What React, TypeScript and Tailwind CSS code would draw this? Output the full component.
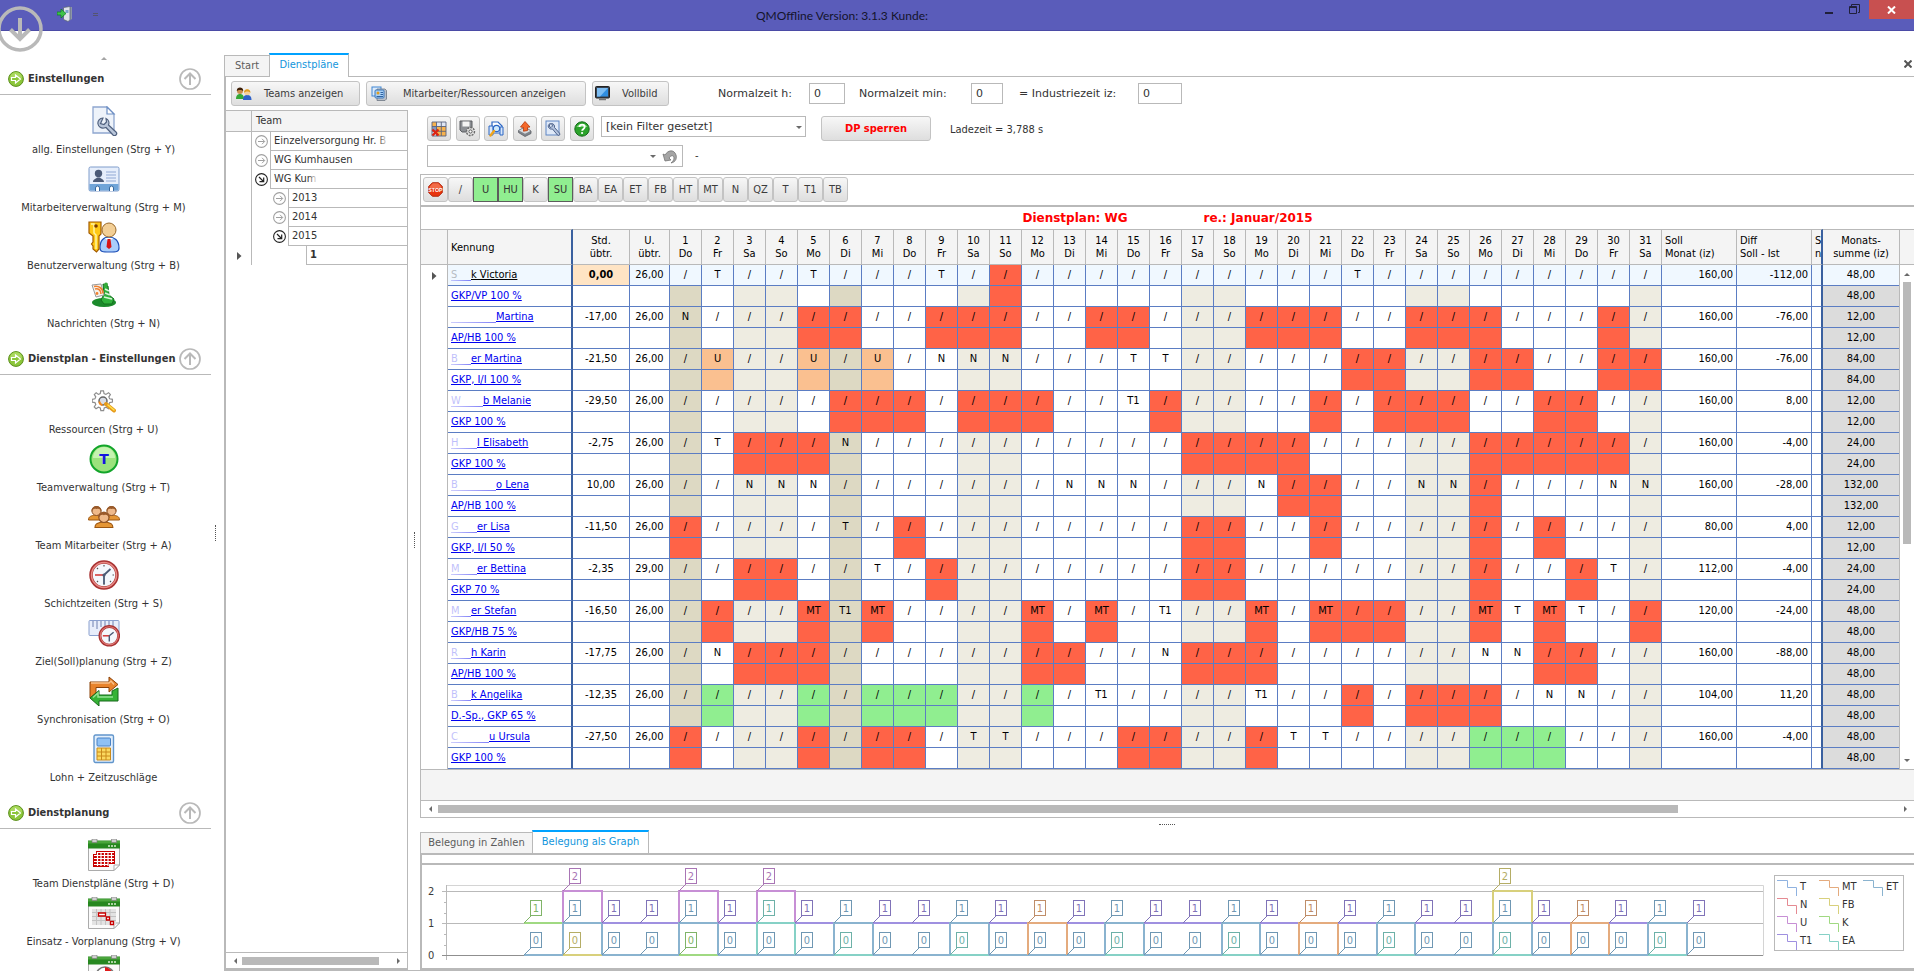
import { useState } from "react";
import type { ReactNode } from "react";

interface NavItem {
  label: string;
  icon: ReactNode;
}

interface NavSection {
  title: string;
  items: NavItem[];
}

interface Employee {
  head: string;
  tail: string;
  fade: string;
  role: string;
  hours: string;
  vacation: string;
  marks: Record<number, string>;
  red?: number[];
  green?: number[];
  orange?: number[];
  target: string;
  diff: string;
  total: string;
}

const WEEKDAYS = ["Do", "Fr", "Sa", "So", "Mo", "Di", "Mi"];
const DAYS = Array.from({ length: 31 }, (_, i) => i + 1);
const WEEKEND = [3, 4, 10, 11, 17, 18, 24, 25, 31];
const HOLIDAYS = [1, 6];

const EMPLOYEES: Employee[] = [
  { head: "S", tail: "k Victoria", fade: "w-[20px]", role: "GKP/VP 100 %", hours: "0,00", vacation: "26,00", marks: { 2: "T", 5: "T", 9: "T", 22: "T" }, red: [11], target: "160,00", diff: "-112,00", total: "48,00" },
  { head: "", tail: "Martina", fade: "w-[45px]", role: "AP/HB 100 %", hours: "-17,00", vacation: "26,00", marks: { 1: "N" }, red: [5, 6, 9, 10, 11, 14, 15, 19, 20, 21, 24, 25, 26, 30], target: "160,00", diff: "-76,00", total: "12,00" },
  { head: "B", tail: "er Martina", fade: "w-[20px]", role: "GKP, I/I 100 %", hours: "-21,50", vacation: "26,00", marks: { 2: "U", 5: "U", 7: "U", 9: "N", 10: "N", 11: "N", 15: "T", 16: "T" }, red: [22, 23, 26, 27, 30, 31], orange: [2, 5, 7], target: "160,00", diff: "-76,00", total: "84,00" },
  { head: "W", tail: "b Melanie", fade: "w-[32px]", role: "GKP 100 %", hours: "-29,50", vacation: "26,00", marks: { 15: "T1" }, red: [6, 7, 8, 10, 11, 12, 16, 21, 23, 24, 25, 28, 29], target: "160,00", diff: "8,00", total: "12,00" },
  { head: "H", tail: "l Elisabeth", fade: "w-[26px]", role: "GKP 100 %", hours: "-2,75", vacation: "26,00", marks: { 2: "T", 6: "N" }, red: [3, 4, 5, 17, 18, 19, 20, 26, 27, 28, 29, 30], target: "160,00", diff: "-4,00", total: "24,00" },
  { head: "B", tail: "o Lena", fade: "w-[45px]", role: "AP/HB 100 %", hours: "10,00", vacation: "26,00", marks: { 3: "N", 4: "N", 5: "N", 13: "N", 14: "N", 15: "N", 19: "N", 24: "N", 25: "N", 30: "N", 31: "N" }, red: [20, 21, 26], target: "160,00", diff: "-28,00", total: "132,00" },
  { head: "G", tail: "er Lisa", fade: "w-[26px]", role: "GKP, I/I 50 %", hours: "-11,50", vacation: "26,00", marks: { 6: "T" }, red: [1, 8, 17, 18, 21, 26, 28], target: "80,00", diff: "4,00", total: "12,00" },
  { head: "M", tail: "er Bettina", fade: "w-[26px]", role: "GKP 70 %", hours: "-2,35", vacation: "29,00", marks: { 7: "T", 30: "T" }, red: [3, 4, 9, 17, 18, 26, 29], target: "112,00", diff: "-4,00", total: "24,00" },
  { head: "M", tail: "er Stefan", fade: "w-[20px]", role: "GKP/HB 75 %", hours: "-16,50", vacation: "26,00", marks: { 5: "MT", 6: "T1", 7: "MT", 12: "MT", 14: "MT", 16: "T1", 19: "MT", 21: "MT", 26: "MT", 27: "T", 28: "MT", 29: "T" }, red: [2, 5, 7, 12, 14, 19, 21, 22, 23, 26, 28, 31], target: "120,00", diff: "-24,00", total: "48,00" },
  { head: "R", tail: "h Karin", fade: "w-[20px]", role: "AP/HB 100 %", hours: "-17,75", vacation: "26,00", marks: { 2: "N", 16: "N", 26: "N", 27: "N" }, red: [3, 4, 5, 12, 13, 17, 18, 19, 28, 29], target: "160,00", diff: "-88,00", total: "48,00" },
  { head: "B", tail: "k Angelika", fade: "w-[20px]", role: "D.-Sp., GKP 65 %", hours: "-12,35", vacation: "26,00", marks: { 14: "T1", 19: "T1", 28: "N", 29: "N" }, red: [22, 24, 25, 26], green: [2, 5, 7, 8, 9, 12], target: "104,00", diff: "11,20", total: "48,00" },
  { head: "C", tail: "u Ursula", fade: "w-[38px]", role: "GKP 100 %", hours: "-27,50", vacation: "26,00", marks: { 10: "T", 11: "T", 20: "T", 21: "T" }, red: [1, 5, 7, 8, 15, 16, 19], green: [26, 27, 28], target: "160,00", diff: "-4,00", total: "48,00" },
];

const SHIFT_KEYS = ["/", "U", "HU", "K", "SU", "BA", "EA", "ET", "FB", "HT", "MT", "N", "QZ", "T", "T1", "TB"];
const ACTIVE_KEYS = ["U", "HU", "SU"];

const BUTTON =
  "flex items-center rounded-[3px] border border-[#c3c3c3] bg-linear-to-b from-[#f7f7f7] to-[#dedede] text-[#3b3b3b]";

/* ---------- icons ---------- */

function PageWrenchIcon() {
  return (
    <svg width="30" height="30" viewBox="0 0 30 30">
      <path d="M4 1h14l7 7v19H4z" fill="#eef3fa" stroke="#8ea6cf" strokeWidth="1.3" />
      <path d="M18 1v7h7z" fill="#fff" stroke="#6d8fc4" strokeWidth="1.2" />
      <path d="M13 11a5 5 0 0 0-5 6 5 5 0 0 0 6 4l2-.5 7 7.500c2 2 5-1 3-3l-7.500-7a5 5 0 0 0-2.500-6.500l.5 3.500-2.500 2.500-3.500-1z" transform="translate(1 1)" fill="#b9c6da" stroke="#50617f" strokeWidth="1.2" />
    </svg>
  );
}

function ContactCardIcon() {
  return (
    <svg width="32" height="26" viewBox="0 0 32 26">
      <rect x="1" y="1" width="30" height="24" rx="1.500" fill="#e6eefb" stroke="#7e9ccb" />
      <rect x="1.500" y="18" width="29" height="6.500" fill="#6fa4d8" />
      <circle cx="10.500" cy="7.500" r="3.700" fill="#4c5b78" />
      <path d="M5 16c0-3 3-3 4-4.500h3c1 1.500 4 1.500 4 4.500z" fill="#4c5b78" />
      <path d="M18 6h10M18 9h10M18 12h10M18 15h10" stroke="#90a8d4" />
      <path d="M7.500 25v-3a2 2 0 0 1 4 0v3M21.500 25v-3a2 2 0 0 1 4 0v3" fill="#fff" stroke="#35679d" />
    </svg>
  );
}

function KeyUserIcon() {
  return (
    <svg width="32" height="32" viewBox="0 0 32 32">
      <path d="M12 27c0-8 4-11 9-11s10 3 10 11c0 4-3 4-9.500 4S12 31 12 27z" fill="#a9cdfa" stroke="#1e50b8" strokeWidth="1.200" />
      <path d="M17 17l4 4 4-4z" fill="#fff" />
      <path d="M19.500 18h3l1 8-2.500 2-2.500-2z" fill="#d81414" />
      <circle cx="21" cy="9" r="7" fill="#f3cf96" stroke="#9b6a2b" />
      <path d="M1 1h12v12l-2 2v13l-2.500 3L5 28v-3l-1.500-2L5 21v-6l-4-3z" fill="#ffc814" stroke="#a35a00" strokeWidth="1.200" />
      <path d="M3 3h3v9l2 2v14" fill="none" stroke="#fff3a0" strokeWidth="1.500" />
      <circle cx="8" cy="5" r="1.800" fill="#7b3b00" />
    </svg>
  );
}

function NewsIcon() {
  return (
    <svg width="26" height="26" viewBox="0 0 26 26">
      <ellipse cx="13" cy="20.500" rx="12" ry="4.500" fill="#1b8a2b" />
      <path d="M12 2l5 2 1 9 5 4-2 5h-8l-3-4 3-6z" fill="#2fb23b" stroke="#14701f" />
      <path d="M14 7l4 2M14 11l5 2M13 15l8 2" stroke="#d9f5d8" strokeWidth="1.500" />
      <path d="M1 3l9-1 3 11-8 2z" fill="#f5f1ea" stroke="#9a9a9a" />
      <path d="M4 7c3-1 6 1 6 5M3 4.500c5-1 9 2 9 7" fill="none" stroke="#f08030" strokeWidth="1.600" />
      <circle cx="6" cy="11.500" r="1.400" fill="#f08030" />
      <circle cx="15" cy="2.500" r="2" fill="#36a93b" />
    </svg>
  );
}

function GearLensIcon() {
  return (
    <svg width="24" height="24" viewBox="0 0 24 24">
      <path d="M9.500 2h3l.6 3 2 .9L18 4l2 2-1.700 2.600.9 2 3 .6v3l-3 .6-.9 2L20 19.500l-2 2-2.700-1.700-2 .8-.7 3h-3l-.6-3-2-.8-2.600 1.700-2-2 1.700-2.700-.9-2-3-.6v-3l3-.6.9-2L2.500 6l2-2L7 5.900 9 5z" transform="scale(.92)" fill="#fff" stroke="#8d8d8d" strokeWidth="1.300" />
      <circle cx="11" cy="12" r="4" fill="#d8dde6" stroke="#666" strokeWidth="1.500" />
      <path d="M7.500 12.500a3.500 3.500 0 0 0 3 3.500" stroke="#f48a1c" strokeWidth="2" fill="none" />
      <path d="M14 15l8 6.500" stroke="#e79b1b" strokeWidth="4" strokeLinecap="round" />
      <path d="M16 16l6 5" stroke="#ffe14d" strokeWidth="1.500" strokeLinecap="round" />
    </svg>
  );
}

function TeamBadgeIcon() {
  return (
    <svg width="30" height="30" viewBox="0 0 30 30">
      <circle cx="15" cy="15" r="13.500" fill="#9be27c" stroke="#12a52a" strokeWidth="2" />
      <path d="M4 14a11 11 0 0 1 22 0z" fill="#c5f3b0" />
      <text x="15" y="20" textAnchor="middle" fontSize="14" fontWeight="bold" fill="#1414e0" fontFamily="DejaVu Sans, sans-serif">
        T
      </text>
    </svg>
  );
}

function Person({ x, y }: { x: number; y: number }) {
  return (
    <g transform={`translate(${x} ${y})`}>
      <path d="M0 15c0-4 3-4 6-5h4c3 1 6 1 6 5z" fill="#e59635" stroke="#9c5610" />
      <circle cx="8" cy="6" r="4.500" fill="#efb98a" stroke="#8d5226" />
      <path d="M3 7c-1-8 11-8 10 0-1-3-3-4-5-3-2-1-4 0-5 3z" fill="#9a5a2a" />
    </g>
  );
}

function TeamIcon() {
  return (
    <svg width="32" height="27" viewBox="0 0 32 27">
      <Person x={0.5} y={1} />
      <Person x={15.5} y={1} />
      <g transform="translate(-2 0) scale(1.120)">
        <Person x={8} y={6} />
      </g>
    </svg>
  );
}

function ClockIcon() {
  return (
    <svg width="30" height="30" viewBox="0 0 30 30">
      <circle cx="15" cy="15" r="13" fill="#f4f7fc" stroke="#a83232" strokeWidth="3.500" />
      <circle cx="15" cy="15" r="12.500" fill="none" stroke="#e88a85" strokeWidth="1.500" />
      <path d="M15 5v1.500M15 23.500V25M8 8l1 1M22 22l-1-1M8 22l1-1M25 15h-1.500" stroke="#555" strokeWidth="1.200" />
      <path d="M6 15h9" stroke="#d03030" strokeWidth="1.500" />
      <path d="M15 15l6.500-6M15 15v9" stroke="#4b5a75" strokeWidth="1.800" />
      <circle cx="15" cy="15" r="1.600" fill="#4b5a75" />
    </svg>
  );
}

function RulerClockIcon() {
  return (
    <svg width="32" height="28" viewBox="0 0 32 28">
      <rect x="1" y="1.500" width="30" height="15" rx="1" fill="#e8eefb" stroke="#8aa0cf" />
      <path d="M5 2v6M9 2v8M13 2v6M17 2v6M21 2v6M25 2v6" stroke="#6e80b0" />
      <g transform="translate(10.500 6) scale(.72)">
        <circle cx="15" cy="15" r="13" fill="#f4f7fc" stroke="#a83232" strokeWidth="4" />
        <circle cx="15" cy="15" r="12.500" fill="none" stroke="#e07a76" strokeWidth="1.500" />
        <path d="M6 15h9" stroke="#d03030" strokeWidth="2" />
        <path d="M15 15l6-5M15 15v8" stroke="#4b5a75" strokeWidth="2" />
      </g>
    </svg>
  );
}

function SyncIcon() {
  return (
    <svg width="30" height="30" viewBox="0 0 30 30">
      <path d="M1 6h19V1l9 7.500-9 7.500v-4.500H7V17l-6 5z" fill="#e8832b" stroke="#8a4209" />
      <path d="M2 7h18l2-2 3 3.500" fill="none" stroke="#f7c18a" strokeWidth="1.500" />
      <path d="M29 12v13H10v5l-9-8 9-7.500V19h13v-4z" fill="#36b336" stroke="#16691a" />
      <path d="M4 21.500L9 17v4h15" fill="none" stroke="#94e394" strokeWidth="1.500" />
    </svg>
  );
}

function CalculatorIcon() {
  return (
    <svg width="22" height="30" viewBox="0 0 22 30">
      <rect x="1" y="1" width="19.500" height="27.500" rx="1.500" fill="#e2effc" stroke="#6195cb" strokeWidth="1.400" />
      <rect x="4" y="4" width="13.500" height="8" rx="1" fill="#8fc1f5" stroke="#4a82c5" />
      <path d="M4 14h13.500v12H4z" fill="#fbd95f" stroke="#c98a1b" />
      <path d="M8.500 14v12M13 14v12M4 18h13.500M4 22h13.500" stroke="#c98a1b" />
    </svg>
  );
}

function CalendarIcon({ variant }: { variant: "grid" | "plan" | "pie" }) {
  return (
    <svg width="32" height="32" viewBox="0 0 32 32">
      <path d="M.5 2.500h31V26L26 31.500H.5z" fill="#fafafa" stroke="#ababab" />
      <path d="M0 1.500h32v8H0z" fill="#26871f" />
      <path d="M0 2h32v2.500H0z" fill="#4aa53c" />
      <path d="M20 7h8" stroke="#d7edcf" strokeWidth="1.500" strokeDasharray="2 1" />
      <path d="M4 0h5v3.500H4zM23.500 0h5v3.500h-5z" fill="#cfcfcf" stroke="#777" strokeWidth=".6" />
      <path d="M31.500 26H26v5.500z" fill="#fff" stroke="#ababab" />
      {variant === "grid" && (
        <g>
          <path d="M8 12h19v13h-6v3H5V15h3z" fill="#c80000" />
          <path d="M6 16.500h20M6 19.500h20M6 22.500h20M6 25.500h14M9.500 13v14M13 13v14M16.500 13v14M20 13v14M23.500 13v11M9 13.500h17" stroke="#fff" strokeWidth="1.200" />
        </g>
      )}
      {variant === "plan" && (
        <g>
          <path d="M4 12h24v16H4z" fill="#e3e3e3" />
          <path d="M4 15.500h24M4 19.500h24M4 23.500h24M8.500 12v16M13 12v16M17.500 12v16M22 12v16" stroke="#c2c2c2" />
          <path d="M10.500 16h7v3h-7zM18.500 20h3v3h-3zM22.500 24.500h3v3h-3z" fill="#fff" stroke="#c80000" strokeWidth="1.300" />
        </g>
      )}
      {variant === "pie" && (
        <g>
          <circle cx="17" cy="21" r="9" fill="#fff" stroke="#777" strokeWidth="1.500" />
          <path d="M17 21v-9a9 9 0 0 1 8 9z" fill="#e01b1b" />
        </g>
      )}
    </svg>
  );
}

function GreenArrowIcon() {
  return (
    <svg width="16" height="16" viewBox="0 0 16 16">
      <circle cx="8" cy="8" r="7.400" fill="#8cc63a" stroke="#5b8f1c" />
      <path d="M2 7a6 6 0 0 1 12 0z" fill="#b4e06a" opacity=".7" />
      <path d="M3.500 6.500h4v-2.500l5 4-5 4V9.500h-4z" fill="#8cc63a" stroke="#fff" strokeWidth="1.200" />
    </svg>
  );
}

function CircleArrowUpIcon() {
  return (
    <svg width="22" height="22" viewBox="0 0 22 22" fill="none" stroke="#b9b9b9">
      <circle cx="11" cy="11" r="10" strokeWidth="1.700" />
      <path d="M11 17V6M5.500 11L11 5.500l5.500 5.500" strokeWidth="2" />
    </svg>
  );
}

function ExpanderIcon({ open }: { open: boolean }) {
  return (
    <svg width="13" height="13" viewBox="0 0 13 13" fill="none" stroke={open ? "#222" : "#a0a0a0"}>
      <circle cx="6.500" cy="6.500" r="5.900" strokeWidth="1.100" />
      {open ? <path d="M4 4l4.500 4.500M8.700 4.500v4.200H4.500" strokeWidth="1.200" /> : <path d="M3 6.500h6.500M7 3.800l2.700 2.700L7 9.200" />}
    </svg>
  );
}

function Arrow({ dir }: { dir: "left" | "right" | "up" | "down" }) {
  const paths = {
    left: "M7 2v6L4 5z",
    right: "M4 2v6l3-3z",
    up: "M2 7h6L5 4z",
    down: "M2 4h6L5 7z",
  };
  return (
    <svg width="10" height="10" viewBox="0 0 10 10" className="shrink-0">
      <path d={paths[dir]} fill="#6a6a6a" />
    </svg>
  );
}

function DoorIcon() {
  return (
    <svg width="16" height="16" viewBox="0 0 16 16">
      <path d="M7 1h8v12l-3 2V3z" fill="#8d96a8" />
      <path d="M6.500 1.500L13 .5V14l-2 1.500-4.500-2z" fill="#dfe3ea" stroke="#5b6478" strokeWidth=".8" />
      <path d="M8.500 4h3v3h-3z" fill="#7da3cf" />
      <path d="M0 6h4V3l5 4.500L4 12V9H0z" fill="#3ec24a" stroke="#0c7a20" strokeWidth=".7" />
    </svg>
  );
}

function PeopleSmallIcon() {
  return (
    <svg width="16" height="14" viewBox="0 0 16 14">
      <path d="M0 12c0-4 2-5 4-5s4 1 4 5z" fill="#36a836" />
      <circle cx="4" cy="4" r="3" fill="#c98e4d" />
      <path d="M.8 4C.5-.8 7.500-.8 7.200 4 6 2.500 2 2.500.8 4z" fill="#3d1f08" />
      <path d="M7 13c0-4 2-5 4.200-5s4.300 1 4.300 5z" fill="#2f62c9" />
      <circle cx="11.200" cy="5.300" r="3" fill="#f4cf9a" />
      <path d="M8 6c-.5-5 6.800-5 6.400 0-1-2-5-2-6.400 0z" fill="#e09c1f" />
    </svg>
  );
}

function CardsSmallIcon() {
  return (
    <svg width="16" height="15" viewBox="0 0 16 15">
      <rect x="1" y="1" width="9" height="9" fill="#dcebfb" stroke="#3f86d4" />
      <path d="M6 3h8l1.500 1.500V13L14 14.500H6z" fill="#b9bfc8" stroke="#6d7683" strokeWidth=".8" />
      <rect x="4" y="4" width="9" height="8" rx="1" fill="#a9d0f5" stroke="#3f78ba" />
      <circle cx="7" cy="7" r="1.500" fill="#e09c1f" />
      <path d="M9.500 6.500h2.500M9.500 8.500h2.500M5.500 10.500H12" stroke="#2f62a0" />
    </svg>
  );
}

function MonitorIcon() {
  return (
    <svg width="15" height="15" viewBox="0 0 15 15">
      <rect x=".5" y=".5" width="14" height="11.500" rx="1" fill="#39424f" stroke="#222" />
      <rect x="2" y="2" width="11" height="8.500" fill="#2f8ee0" />
      <path d="M2 2h11L5 10.500H2z" fill="#7dbdf2" />
      <path d="M4 13.500h7" stroke="#777" strokeWidth="1.500" />
    </svg>
  );
}

function GridDeleteIcon() {
  return (
    <svg width="16" height="16" viewBox="0 0 16 16">
      <path d="M1 1h14v14H1z" fill="#dfe6f4" />
      <path d="M1 1h4.500v4.500H1zM5.500 5.500h9.500v9.500h-9.500z" fill="#f7b24d" />
      <path d="M1 5.500h4.500v4.500H1z" fill="#8496bd" />
      <path d="M1 1h14v14H1zM5.500 1v14M10.300 1v14M1 5.500h14M1 10.300h14" fill="none" stroke="#59637d" strokeWidth=".9" />
      <path d="M1.500 8.500l6 6M7.500 8.500l-6 6" stroke="#dc2513" strokeWidth="2.400" />
    </svg>
  );
}

function SaveGearIcon() {
  return (
    <svg width="17" height="17" viewBox="0 0 17 17">
      <path d="M1 1h12v11H3l-2-2z" fill="#8c8f94" stroke="#5b5d61" />
      <path d="M3.500 1.500h7v5h-7z" fill="#f4f4f4" />
      <circle cx="11.500" cy="11.500" r="4" fill="#e4e4e4" stroke="#6b6b6b" strokeWidth="1.400" strokeDasharray="2 1" />
      <circle cx="11.500" cy="11.500" r="1.600" fill="#fff" stroke="#555" />
    </svg>
  );
}

function PreviewIcon() {
  return (
    <svg width="16" height="16" viewBox="0 0 16 16">
      <path d="M4 1h6l4 4v7H4z" fill="#fff" stroke="#2b66c4" strokeWidth="1.200" />
      <path d="M1 5h4v9H1zM12 6h3v8h-3z" fill="#d8e6fa" stroke="#2b66c4" />
      <circle cx="8.500" cy="7.500" r="3.200" fill="#cfe9fb" stroke="#2b66c4" strokeWidth="1.200" />
      <path d="M6 10l-3.500 4.500" stroke="#f0a51c" strokeWidth="2.400" strokeLinecap="round" />
    </svg>
  );
}

function ExportIcon() {
  return (
    <svg width="16" height="16" viewBox="0 0 16 16">
      <path d="M1.500 9.500L8 6l6 4v2.500L8 15.500l-6.500-4z" fill="#7f848b" stroke="#5d6064" strokeWidth=".8" />
      <path d="M2 9.500L8 6.500l5.500 3.500L8 12.800z" fill="#d7dade" />
      <path d="M8 .5l5 5.500-2.500.3v3.200l-4 .7V6.500L3.500 6z" fill="#f4682a" stroke="#b5380a" strokeWidth=".8" />
    </svg>
  );
}

function WrenchBoxIcon() {
  return (
    <svg width="16" height="17" viewBox="0 0 16 17">
      <rect x="1" y="1" width="13" height="14" fill="#dfe9f8" stroke="#5f86c4" />
      <path d="M5.500 3.500C3 4 2.500 7 4.500 8.500c1 .7 2 .7 3 .5l5 6c1.500 1.200 3-.4 2-1.800l-5-5.700c.5-2-1-4-3-4l1 2.500L6 7.500 4 6.500z" fill="#b4c4de" stroke="#40557f" strokeWidth=".9" />
    </svg>
  );
}

function HelpIcon() {
  return (
    <svg width="16" height="16" viewBox="0 0 16 16">
      <circle cx="8" cy="8" r="7.200" fill="#2ba32b" stroke="#146a18" />
      <path d="M2.500 6a6 5 0 0 1 11 0z" fill="#7ed67a" />
      <path d="M5.500 6c0-3.300 5.200-3.300 5.200 0 0 1.900-2.600 1.900-2.600 3.800" fill="none" stroke="#fff" strokeWidth="1.800" />
      <circle cx="8.100" cy="12" r="1.100" fill="#fff" />
    </svg>
  );
}

function UndoIcon() {
  return (
    <svg width="16" height="16" viewBox="0 0 16 16">
      <path d="M1 6l2 7 6-1-2-2c2-3 5-3 5 0 0 2-1 3-3 5 5-1 6-5 5-8-2-6-8-5-11 0z" fill="#a5a5a5" stroke="#747474" strokeWidth=".8" />
    </svg>
  );
}

function StopIcon() {
  return (
    <svg width="15" height="15" viewBox="0 0 17 17">
      <path d="M5 .8h7L16.200 5v7L12 16.200H5L.8 12V5z" fill="#e8330e" stroke="#a81f04" />
      <path d="M5.500 1.500h6L15 5v2H2V5z" fill="#f7835f" opacity=".7" />
      <text x="8.500" y="11" textAnchor="middle" fontSize="6" fontWeight="bold" fill="#fff" fontFamily="Liberation Sans, sans-serif">
        STOP
      </text>
    </svg>
  );
}

/* ---------- sidebar ---------- */

const SECTIONS: NavSection[] = [
  {
    title: "Einstellungen",
    items: [
      { label: "allg. Einstellungen (Strg + Y)", icon: <PageWrenchIcon /> },
      { label: "Mitarbeiterverwaltung (Strg + M)", icon: <ContactCardIcon /> },
      { label: "Benutzerverwaltung (Strg + B)", icon: <KeyUserIcon /> },
      { label: "Nachrichten (Strg + N)", icon: <NewsIcon /> },
    ],
  },
  {
    title: "Dienstplan - Einstellungen",
    items: [
      { label: "Ressourcen (Strg + U)", icon: <GearLensIcon /> },
      { label: "Teamverwaltung (Strg + T)", icon: <TeamBadgeIcon /> },
      { label: "Team Mitarbeiter (Strg + A)", icon: <TeamIcon /> },
      { label: "Schichtzeiten (Strg + S)", icon: <ClockIcon /> },
      { label: "Ziel(Soll)planung (Strg + Z)", icon: <RulerClockIcon /> },
      { label: "Synchronisation (Strg + O)", icon: <SyncIcon /> },
      { label: "Lohn + Zeitzuschläge", icon: <CalculatorIcon /> },
    ],
  },
  {
    title: "Dienstplanung",
    items: [
      { label: "Team Dienstpläne (Strg + D)", icon: <CalendarIcon variant="grid" /> },
      { label: "Einsatz - Vorplanung (Strg + V)", icon: <CalendarIcon variant="plan" /> },
      { label: "", icon: <CalendarIcon variant="pie" /> },
    ],
  },
];

function Sidebar() {
  return (
    <nav className="w-[211px] shrink-0 overflow-hidden">
      <div className="flex h-[33px] items-end justify-center pr-1 pb-px opacity-60">
        <Arrow dir="up" />
      </div>
      {SECTIONS.map((section) => (
        <section key={section.title} className="pb-[11px]">
          <header className="flex h-[31px] items-center border-b border-[#b9b9b9] pr-2.5 pl-2">
            <GreenArrowIcon />
            <h2 className="ml-1 flex-1 font-bold whitespace-nowrap">{section.title}</h2>
            <button aria-label={section.title + " einklappen"}>
              <CircleArrowUpIcon />
            </button>
          </header>
          <ul className="pt-1.5 pr-1">
            {section.items.map((item) => (
              <li key={item.label}>
                <button className="flex h-[58px] w-full flex-col items-center">
                  <span className="flex h-10 shrink-0 items-center justify-center">{item.icon}</span>
                  <span className="leading-[18px] whitespace-nowrap">{item.label}</span>
                </button>
              </li>
            ))}
          </ul>
        </section>
      ))}
    </nav>
  );
}

/* ---------- team tree ---------- */

interface TreeRow {
  label: string;
  level: number;
  open?: boolean;
  faded?: boolean;
}

const TREE: TreeRow[] = [
  { label: "Einzelversorgung Hr. B", level: 0, open: false, faded: true },
  { label: "WG Kumhausen", level: 0, open: false },
  { label: "WG Kum", level: 0, open: true, faded: true },
  { label: "2013", level: 1, open: false },
  { label: "2014", level: 1, open: false },
  { label: "2015", level: 1, open: true },
  { label: "1", level: 2 },
];

const INDENT = ["w-0", "w-[18px]", "w-[18px]"];

function TeamTree() {
  return (
    <aside className="flex w-[182px] shrink-0 flex-col border-t border-r border-[#b9b9b9]">
      <div className="flex h-[21px] shrink-0 border-b border-[#b9b9b9] bg-[#f4f4f4] leading-[19px]">
        <span className="w-[25px]" />
        <span className="flex-1 border-l border-[#b9b9b9] pl-1">Team</span>
      </div>
      <ul className="flex-1">
        {TREE.map((row) => (
          <li key={row.label} className="flex h-[19px]">
            <span className="flex w-[25px] items-center justify-center pl-0.5">
              {row.level === 2 && (
                <svg width="5" height="8" viewBox="0 0 5 8">
                  <path d="M0 0l4.500 4L0 8z" fill="#555" />
                </svg>
              )}
            </span>
            <span className="border-l border-[#b9b9b9]" />
            <span className={INDENT[row.level]} />
            <span className="flex w-[18px] items-center justify-center">
              {row.open !== undefined && (
                <button aria-label={row.label + " umschalten"}>
                  <ExpanderIcon open={row.open} />
                </button>
              )}
            </span>
            {row.level === 2 && <span className="w-[18px]" />}
            <span className="flex-1 overflow-hidden border-b border-l border-[#b9b9b9] pl-[3px] leading-[17px] whitespace-nowrap">
              <span className={row.level === 2 ? "font-bold" : ""}>{row.label}</span>
              {row.faded && <span className="-ml-2 inline-block h-[14px] w-5 bg-linear-to-r from-transparent to-white to-50% align-middle" />}
            </span>
          </li>
        ))}
      </ul>
      <div className="flex h-4 shrink-0 items-center border-t border-[#b9b9b9] px-1">
        <Arrow dir="left" />
        <span className="mx-0.5 flex-1 pr-3">
          <span className="block h-2 bg-[#b9b9b9]" />
        </span>
        <Arrow dir="right" />
      </div>
      <div className="h-0.5 shrink-0 bg-[#b9b9b9]" />
    </aside>
  );
}

/* ---------- toolbars ---------- */

function TopToolbar() {
  return (
    <div className="flex h-[33px] shrink-0 items-start pt-1 pl-[5px]">
      <button className={`${BUTTON} h-[25px] w-[129px] gap-3 pl-1`}>
        <PeopleSmallIcon />
        Teams anzeigen
      </button>
      <button className={`${BUTTON} ml-1.5 h-[25px] w-[220px] gap-4 pl-1`}>
        <CardsSmallIcon />
        Mitarbeiter/Ressourcen anzeigen
      </button>
      <button className={`${BUTTON} ml-1.5 h-[25px] w-[77px] gap-3 pl-0.5`}>
        <MonitorIcon />
        Vollbild
      </button>
      <div className="ml-[49px] flex h-[25px] items-center font-['DejaVu_Sans',sans-serif]">
        <label htmlFor="nz-h" className="w-[91px]">
          Normalzeit h:
        </label>
        <input id="nz-h" defaultValue="0" className="h-[21px] w-9 border border-[#b9b9b9] px-1" />
        <label htmlFor="nz-min" className="ml-3.5 w-[112px]">
          Normalzeit min:
        </label>
        <input id="nz-min" defaultValue="0" className="h-[21px] w-8 border border-[#b9b9b9] px-1" />
        <label htmlFor="iz" className="ml-4 w-[119px]">
          = Industriezeit iz:
        </label>
        <input id="iz" defaultValue="0" className="h-[21px] w-11 border border-[#b9b9b9] px-1" />
      </div>
    </div>
  );
}

function PlanToolbar() {
  const tools = [
    { name: "Plan löschen", icon: <GridDeleteIcon /> },
    { name: "Speichern", icon: <SaveGearIcon /> },
    { name: "Vorschau", icon: <PreviewIcon /> },
    { name: "Export", icon: <ExportIcon /> },
    { name: "Einstellungen", icon: <WrenchBoxIcon /> },
    { name: "Hilfe", icon: <HelpIcon /> },
  ];
  return (
    <div className="h-16 shrink-0 pl-[7px]">
      <div className="flex h-[35px] items-start pt-1.5">
        <div className="flex w-[167px] justify-between">
          {tools.map((tool) => (
            <button key={tool.name} aria-label={tool.name} className={`${BUTTON} h-[25px] w-6 justify-center`}>
              {tool.icon}
            </button>
          ))}
        </div>
        <div className="relative ml-[7px]">
          <select aria-label="Filter" className="h-[21px] w-[205px] appearance-none border border-[#b9b9b9] bg-white px-1 font-['DejaVu_Sans',sans-serif]">
            <option>[kein Filter gesetzt]</option>
          </select>
          <span className="pointer-events-none absolute top-0 right-0.5 flex h-[21px] items-center">
            <Arrow dir="down" />
          </span>
        </div>
        <button className={`${BUTTON} ml-[15px] h-[25px] w-[110px] justify-center`}>
          <span className="font-bold text-[#ff0000]">DP sperren</span>
        </button>
        <span className="ml-[19px] leading-7">Ladezeit = 3,788 s</span>
      </div>
      <div className="flex items-center">
        <div className="flex h-[22px] w-64 items-center border border-[#b9b9b9]">
          <input aria-label="Mitarbeiter suchen" className="h-full min-w-0 flex-1 px-1" />
          <Arrow dir="down" />
          <button aria-label="Zurücksetzen" className="mx-1">
            <UndoIcon />
          </button>
        </div>
        <span className="ml-3">-</span>
      </div>
    </div>
  );
}

/* ---------- roster ---------- */

function dayColor(employee: Employee, day: number, selected: boolean) {
  if (employee.red?.includes(day)) return "bg-[#ff6347]";
  if (employee.green?.includes(day)) return "bg-[#90ee90]";
  if (employee.orange?.includes(day)) return "bg-[#fac090]";
  if (selected) return "bg-[#f0f8ff]";
  if (HOLIDAYS.includes(day)) return "bg-[#ddd9c3]";
  if (WEEKEND.includes(day)) return "bg-[#eeece1]";
  return "";
}

const CELL = "h-[21px] border-r border-b border-[#5b7dc3] p-0 pb-0.5";
const HEAD = "h-9 border-y border-r border-[#b9b9b9] bg-[#f4f4f4] p-0 font-normal";
const THICK = "border-r-2 border-r-[#3a609f]";

function EmployeeRows({ employee, selected }: { employee: Employee; selected: boolean }) {
  const mark = selected ? "bg-[#f0f8ff]" : "";
  return (
    <>
      <tr>
        <td className="border-r border-[#b9b9b9] p-0">
          {selected && (
            <svg width="5" height="8" viewBox="0 0 5 8" className="mx-auto">
              <path d="M0 0l4.500 4L0 8z" fill="#555" />
            </svg>
          )}
        </td>
        <td className={`${CELL} ${THICK} ${mark} pl-[3px]`}>
          <a href="#" className={`flex whitespace-nowrap ${selected ? "text-black" : "text-[#0000f0]"}`}>
            <span className={`${employee.fade} shrink-0 bg-linear-to-r from-[#0000f0]/20 to-[#0000f0]/50 bg-[length:100%_1px] bg-[position:0_12px] bg-no-repeat`}>
              <span className="opacity-25">{employee.head}</span>
            </span>
            <span className="underline underline-offset-1">{employee.tail}</span>
          </a>
        </td>
        <td className={`${CELL} text-center ${selected ? "bg-[#ffe4c4] font-bold" : ""}`}>{employee.hours}</td>
        <td className={`${CELL} text-center ${mark}`}>{employee.vacation}</td>
        {DAYS.map((day) => (
          <td key={day} className={`${CELL} text-center ${dayColor(employee, day, selected)}`}>
            {employee.marks[day] ?? "/"}
          </td>
        ))}
        <td className={`${CELL} ${mark} pr-[3px] text-right`}>{employee.target}</td>
        <td className={`${CELL} ${mark} pr-[3px] text-right`}>{employee.diff}</td>
        <td className={`${CELL} ${THICK} ${mark}`} />
        <td className={`h-[21px] border-b border-[#5b7dc3] p-0 pb-0.5 text-center ${selected ? "bg-[#f0f8ff]" : "bg-[#dcdcdc]"}`}>{employee.total}</td>
      </tr>
      <tr>
        <td className="border-r border-[#b9b9b9] p-0" />
        <td className={`${CELL} ${THICK} pl-[3px]`}>
          <a href="#" className="whitespace-nowrap text-[#0000f0] underline underline-offset-1">
            {employee.role}
          </a>
        </td>
        <td className={CELL} />
        <td className={CELL} />
        {DAYS.map((day) => (
          <td key={day} className={`${CELL} ${dayColor(employee, day, false)}`} />
        ))}
        <td className={CELL} />
        <td className={CELL} />
        <td className={`${CELL} ${THICK}`} />
        <td className="h-[21px] border-b border-[#5b7dc3] bg-[#dcdcdc] p-0 pb-0.5 text-center">{employee.total}</td>
      </tr>
    </>
  );
}

function Roster() {
  return (
    <div className="flex shrink-0">
      <table className="w-full min-w-0 flex-1 table-fixed border-separate border-spacing-0 leading-[13px] text-black">
        <colgroup>
          <col className="w-[27px]" />
          <col className="w-[125px]" />
          <col className="w-[57px]" />
          <col className="w-10" />
          {DAYS.map((day) => (
            <col key={day} className="w-8" />
          ))}
          <col className="w-[75px]" />
          <col className="w-[75px]" />
          <col className="w-[11px]" />
          <col />
        </colgroup>
        <thead>
          <tr>
            <th className={HEAD} />
            <th className={`${HEAD} ${THICK} pl-[3px] text-left`}>Kennung</th>
            <th className={HEAD}>
              Std.
              <br />
              übtr.
            </th>
            <th className={HEAD}>
              U.
              <br />
              übtr.
            </th>
            {DAYS.map((day) => (
              <th key={day} className={HEAD}>
                {day}
                <br />
                {WEEKDAYS[(day - 1) % 7]}
              </th>
            ))}
            <th className={`${HEAD} pl-[3px] text-left`}>
              Soll
              <br />
              Monat (iz)
            </th>
            <th className={`${HEAD} pl-[3px] text-left`}>
              Diff
              <br />
              Soll - Ist
            </th>
            <th className={`${HEAD} ${THICK} overflow-hidden pl-[3px] text-left`}>
              S
              <br />n
            </th>
            <th className="h-9 border-y border-[#b9b9b9] bg-[#f4f4f4] p-0 font-normal">
              Monats-
              <br />
              summe (iz)
            </th>
          </tr>
        </thead>
        <tbody>
          {EMPLOYEES.map((employee, index) => (
            <EmployeeRows key={employee.tail} employee={employee} selected={index === 0} />
          ))}
        </tbody>
      </table>
      <div className="flex w-[15px] shrink-0 flex-col border-l border-[#b9b9b9]">
        <div className="h-9 border-y border-[#b9b9b9] bg-[#f4f4f4]" />
        <div className="flex flex-1 flex-col items-center py-1">
          <Arrow dir="up" />
          <div className="mt-[3px] h-[262px] w-2 bg-[#b9b9b9]" />
          <span className="flex-1" />
          <Arrow dir="down" />
        </div>
      </div>
    </div>
  );
}

/* ---------- occupancy chart ---------- */

const LINE: Record<string, string> = {
  b: "#8ab3cf",
  p: "#9f90e0",
  u: "#c78fd5",
  o: "#e4ab7e",
  y: "#d8d07c",
  g: "#a0d982",
  t: "#86d1c6",
};

const LABEL: Record<string, string> = {
  b: "#6f97b3",
  p: "#8073b8",
  u: "#a975b5",
  o: "#bf8d68",
  y: "#b5ad66",
  g: "#80b468",
  t: "#6db1a8",
};

const ONES = "gbppbptpbppbpopbppbpopbppbpopbp";
const ZEROS = "bybbgbbbtbbtbbbtbbtbbbtbbtbbbtb";
const TWOS: Record<number, string> = { 2: "u", 5: "u", 7: "u", 26: "y" };

// x of the left edge of a day step
const dayX = (day: number) => Math.round(102 + (day - 1) * 38.76);
const levelY = (level: number) => 90 - level * 32;

function PointLabel({ day, level, tone }: { day: number; level: number; tone: string }) {
  const x = dayX(day);
  const y = levelY(level);
  return (
    <g stroke={LABEL[tone]} fill="none">
      <path d={`M${x} ${y}l7 -7`} />
      <rect x={x + 6.5} y={y - 22.5} width="11" height="15" fill="#fff" />
      <text x={x + 12} y={y - 11} textAnchor="middle" fontSize="11" stroke="none" fill={LABEL[tone]}>
        {level}
      </text>
    </g>
  );
}

function OccupancyChart() {
  return (
    <svg viewBox="0 0 1345 103" className="h-[103px] w-[1345px] shrink-0">
      <g stroke="#b9b9b9" fill="none">
        <path d="M24 20.500h1317.500v70" stroke="#d4d4d4" />
        <path d="M20 26.500h1321M20 58.500h1321" />
        <path d="M24.500 20v75" />
        <path d="M22 37.500h3M22 48.500h3M22 69.500h3M22 80.500h3" />
        <path d="M20 90.500h1321" stroke="#8f8f8f" />
      </g>
      <g fontSize="11" fill="#3b3b3b">
        <text x="6" y="30">2</text>
        <text x="6" y="62">1</text>
        <text x="6" y="94">0</text>
      </g>
      <g strokeWidth="2" fill="none">
        {DAYS.slice(0, 30).map((day) => {
          const one = ONES[day - 1];
          const x1 = dayX(day);
          const x2 = dayX(day + 1);
          return (
            <g key={day}>
              <path d={`M${x1} 90H${x2}`} stroke={LINE[ZEROS[day - 1]]} />
              {TWOS[day] && <path d={`M${x1} 58V26H${x2}V58`} stroke={LINE[TWOS[day]]} />}
              <path d={`M${x1} 58H${x2}`} stroke={LINE[one]} />
              {"bot".includes(one) && <path d={`M${x1} 90V58H${x2}V90`} stroke={LINE[one]} />}
            </g>
          );
        })}
      </g>
      {DAYS.map((day) => (
        <g key={day}>
          <PointLabel day={day} level={0} tone={ZEROS[day - 1]} />
          <PointLabel day={day} level={1} tone={ONES[day - 1]} />
          {TWOS[day] && <PointLabel day={day} level={2} tone={TWOS[day]} />}
        </g>
      ))}
    </svg>
  );
}

function Legend() {
  const entries = [
    { name: "T", color: "#8fb2e0" },
    { name: "N", color: "#e58a92" },
    { name: "U", color: LINE.u },
    { name: "T1", color: LINE.p },
    { name: "MT", color: LINE.o },
    { name: "FB", color: LINE.y },
    { name: "K", color: LINE.g },
    { name: "EA", color: LINE.t },
    { name: "ET", color: LINE.b },
  ];
  return (
    <ul className="mt-2.5 mr-2.5 ml-auto grid h-[76px] w-[130px] shrink-0 grid-flow-col grid-cols-[42px_44px_42px] grid-rows-4 border border-[#b9b9b9] pt-0.5 pl-0.5">
      {entries.map((entry) => (
        <li key={entry.name} className="flex items-center">
          <svg width="21" height="17" viewBox="0 0 21 17" className="shrink-0">
            <path d="M0 1.500h10.500v7h9V17" fill="none" stroke={entry.color} />
          </svg>
          <span className="ml-0.5">{entry.name}</span>
        </li>
      ))}
    </ul>
  );
}

/* ---------- tabs ---------- */

interface TabsProps {
  tabs: string[];
  active: number;
  onSelect: (index: number) => void;
  widths: string[];
}

function Tabs({ tabs, active, onSelect, widths }: TabsProps) {
  return (
    <div role="tablist" className="flex items-end">
      {tabs.map((tab, index) => (
        <button
          key={tab}
          role="tab"
          aria-selected={index === active}
          onClick={() => onSelect(index)}
          className={
            index === active
              ? `${widths[index]} -mb-px h-[24px] border-x border-t-2 border-x-[#b9b9b9] border-t-[#00a2ff] bg-white pb-0.5 text-[#1296dc]`
              : `${widths[index]} h-[21px] border-t border-l border-[#b9b9b9] bg-[#f4f4f4] text-[#5c5c5c]`
          }
        >
          {tab}
        </button>
      ))}
    </div>
  );
}

export default function App() {
  const [page, setPage] = useState(1);
  const [view, setView] = useState(1);

  return (
    <div className="flex h-screen flex-col overflow-hidden bg-white font-['DejaVu_Sans_Condensed','Noto_Sans',sans-serif] text-[11px] leading-[14px] text-[#333333]">
      {/* title bar */}
      <header className="relative flex h-[31px] shrink-0 border-b border-[#4b4ba6] bg-[#5a5cba]">
        <svg width="46" height="48" viewBox="0 0 46 48" className="absolute top-[5px] -left-[3px] z-10" fill="none" stroke="#b9b9b9">
          <circle cx="23" cy="24" r="21" strokeWidth="3.500" />
          <path d="M23 13v20M13.500 24.500L23 34l9.500-9.500" strokeWidth="4" />
        </svg>
        <button aria-label="Beenden" className="mt-1.5 ml-[57px] self-start">
          <DoorIcon />
        </button>
        <span className="mt-[13px] ml-5 h-[3px] w-[5px] border-y border-[#54546f]" />
        <h1 className="absolute inset-x-0 pr-[230px] text-center font-['Lato',sans-serif] text-xs leading-8 text-[#14142c]">QMOffline Version: 3.1.3 Kunde:</h1>
        <div className="relative ml-auto flex h-[19px]">
          <button aria-label="Minimieren" className="flex w-[22px] items-center justify-center">
            <svg width="9" height="10" viewBox="0 0 9 10">
              <path d="M0 8h8" stroke="#20203a" strokeWidth="2" />
            </svg>
          </button>
          <button aria-label="Wiederherstellen" className="flex w-[29px] items-center justify-center">
            <svg width="11" height="11" viewBox="0 0 11 11" fill="none" stroke="#20203a">
              <path d="M2.500 2V.5h8v8H9" />
              <path d="M.5 2.500h7v7h-7z" />
              <path d="M.5 3.500h7" />
            </svg>
          </button>
          <button aria-label="Schließen" className="flex w-[45px] items-center justify-center bg-[#c85050]">
            <svg width="9" height="8" viewBox="0 0 9 8" stroke="#fff" strokeWidth="2">
              <path d="M1 .5l7 7M8 .5l-7 7" />
            </svg>
          </button>
        </div>
      </header>

      <div className="flex min-h-0 flex-1">
        <Sidebar />
        <div className="flex w-[13px] shrink-0 items-center pt-16 pl-1">
          <span className="h-4 border-l border-dotted border-[#555]" />
        </div>

        <main className="flex min-w-0 flex-1 flex-col">
          <div className="flex h-[46px] shrink-0 items-end justify-between border-b border-[#b9b9b9]">
            <Tabs tabs={["Start", "Dienstpläne"]} active={page} onSelect={setPage} widths={["w-[45px]", "w-20"]} />
            <button aria-label="Tab schließen" className="mr-0.5 mb-2">
              <svg width="8" height="8" viewBox="0 0 8 8" stroke="#555" strokeWidth="2">
                <path d="M.5 .5l7 7M7.500 .5l-7 7" />
              </svg>
            </button>
          </div>

          <div className="flex min-h-0 flex-1 flex-col border-b border-l-2 border-[#b9b9b9]">
            <TopToolbar />
            <div className="flex min-h-0 flex-1">
              <TeamTree />
              <div className="flex w-3 shrink-0 items-center justify-center">
                <span className="h-4 border-l border-dotted border-[#555]" />
              </div>

              <div className="flex min-w-0 flex-1 flex-col">
                <PlanToolbar />

                <section className="shrink-0 border-t border-l border-[#b9b9b9]">
                  <div className="flex border-b-2 border-[#b9b9b9] px-0.5 pt-0.5 pb-[3px]">
                    <button aria-label="Stop" className={`${BUTTON} h-[25px] w-[25px] justify-center`}>
                      <StopIcon />
                    </button>
                    {SHIFT_KEYS.map((key) => (
                      <button
                        key={key}
                        className={
                          ACTIVE_KEYS.includes(key)
                            ? "h-[25px] w-[25px] border border-[#5c5c5c] bg-[#90ee90] text-[#333333]"
                            : `${BUTTON} h-[25px] w-[25px] justify-center`
                        }
                      >
                        {key}
                      </button>
                    ))}
                  </div>
                  <h2 className="flex h-[22px] items-center justify-center font-['DejaVu_Sans',sans-serif] text-xs font-bold text-[#ff0000]">
                    <span className="mr-[76px]">Dienstplan: WG</span>
                    <span>re.: Januar/2015</span>
                  </h2>
                  <Roster />
                  <div className="h-[31px] border-t border-[#b9b9b9] bg-[#f4f4f4]" />
                  <div className="flex h-[18px] items-center border-y border-[#b9b9b9] px-1">
                    <Arrow dir="left" />
                    <span className="mx-[3px] flex-1">
                      <span className="block h-2 w-[85%] bg-[#b9b9b9]" />
                    </span>
                    <Arrow dir="right" />
                  </div>
                </section>

                <div className="flex h-3 shrink-0 items-center justify-center">
                  <span className="w-4 border-t border-dotted border-[#555]" />
                </div>

                <Tabs
                  tabs={["Belegung in Zahlen", "Belegung als Graph"]}
                  active={view}
                  onSelect={setView}
                  widths={["w-[112px]", "w-[117px]"]}
                />
                <section className="flex min-h-0 flex-1 flex-col border-y-2 border-l-2 border-[#b9b9b9]">
                  <div className="h-2.5 shrink-0 border-b-2 border-[#b9b9b9]" />
                  <div className="flex min-h-0 flex-1">
                    <OccupancyChart />
                    <Legend />
                  </div>
                </section>
              </div>
            </div>
          </div>
        </main>
      </div>
    </div>
  );
}
